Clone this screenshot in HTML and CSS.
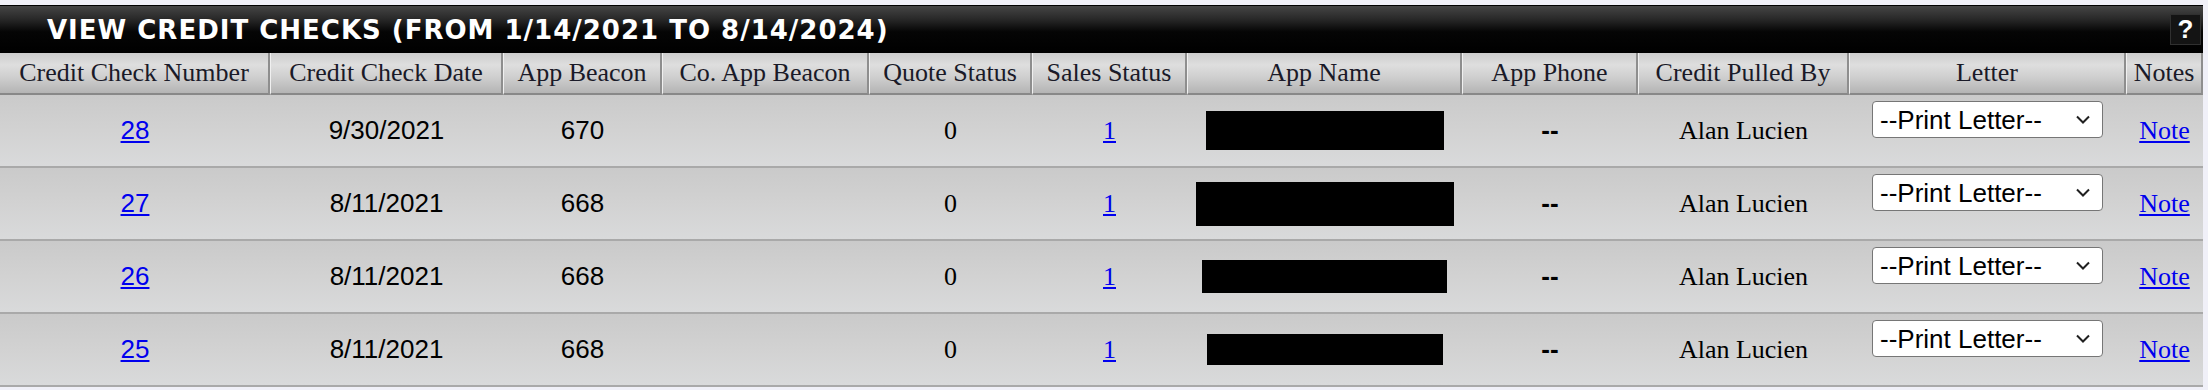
FILE: index.html
```html
<!DOCTYPE html>
<html>
<head>
<meta charset="utf-8">
<title>View Credit Checks</title>
<link rel="stylesheet" href="styles.css">
</head>
<body>
<div class="page">
  <div class="banner">
    <h1 class="banner-title">VIEW CREDIT CHECKS (FROM 1/14/2021 TO 8/14/2024)</h1>
    <span class="help">?</span>
  </div>
  <table class="grid">
    <colgroup>
      <col class="c1"><col class="c2"><col class="c3"><col class="c4"><col class="c5"><col class="c6"><col class="c7"><col class="c8"><col class="c9"><col class="c10"><col class="c11">
    </colgroup>
    <thead>
      <tr>
        <th>Credit Check Number</th>
        <th>Credit Check Date</th>
        <th>App Beacon</th>
        <th>Co. App Beacon</th>
        <th>Quote Status</th>
        <th>Sales Status</th>
        <th>App Name</th>
        <th>App Phone</th>
        <th>Credit Pulled By</th>
        <th>Letter</th>
        <th>Notes</th>
      </tr>
    </thead>
    <tbody>
      <tr>
        <td class="sans"><a href="#">28</a></td>
        <td class="sans">9/30/2021</td>
        <td class="sans">670</td>
        <td class="sans"></td>
        <td class="serif">0</td>
        <td class="serif"><a href="#">1</a></td>
        <td><div class="redact redact-a"></div></td>
        <td class="sans dash">--</td>
        <td class="serif">Alan Lucien</td>
        <td><select class="letter"><option>--Print Letter--</option></select></td>
        <td class="serif"><a href="#">Note</a></td>
      </tr>
      <tr>
        <td class="sans"><a href="#">27</a></td>
        <td class="sans">8/11/2021</td>
        <td class="sans">668</td>
        <td class="sans"></td>
        <td class="serif">0</td>
        <td class="serif"><a href="#">1</a></td>
        <td><div class="redact redact-b"></div></td>
        <td class="sans dash">--</td>
        <td class="serif">Alan Lucien</td>
        <td><select class="letter"><option>--Print Letter--</option></select></td>
        <td class="serif"><a href="#">Note</a></td>
      </tr>
      <tr>
        <td class="sans"><a href="#">26</a></td>
        <td class="sans">8/11/2021</td>
        <td class="sans">668</td>
        <td class="sans"></td>
        <td class="serif">0</td>
        <td class="serif"><a href="#">1</a></td>
        <td><div class="redact redact-c"></div></td>
        <td class="sans dash">--</td>
        <td class="serif">Alan Lucien</td>
        <td><select class="letter"><option>--Print Letter--</option></select></td>
        <td class="serif"><a href="#">Note</a></td>
      </tr>
      <tr>
        <td class="sans"><a href="#">25</a></td>
        <td class="sans">8/11/2021</td>
        <td class="sans">668</td>
        <td class="sans"></td>
        <td class="serif">0</td>
        <td class="serif"><a href="#">1</a></td>
        <td><div class="redact redact-d"></div></td>
        <td class="sans dash">--</td>
        <td class="serif">Alan Lucien</td>
        <td><select class="letter"><option>--Print Letter--</option></select></td>
        <td class="serif"><a href="#">Note</a></td>
      </tr>
    </tbody>
  </table>
</div>
</body>
</html>
```

FILE: styles.css
```css
html, body {
  margin: 0;
  padding: 0;
}
body {
  background: #f0f0f8;
  padding-top: 5px;
}
.page {
  width: 2203px;
}
.banner {
  display: flex;
  align-items: center;
  height: 47px;
  border-top: 1px solid #000;
  padding-left: 47px;
  padding-right: 2px;
  background: linear-gradient(to bottom, #454545 0%, #262626 30%, #050505 55%, #000 100%);
}
.banner-title {
  margin: 0;
  font-family: "DejaVu Sans", Verdana, sans-serif;
  font-weight: bold;
  font-size: 26px;
  letter-spacing: 1px;
  color: #fff;
}
.help {
  margin-left: auto;
  width: 29px;
  height: 29px;
  border: 1px solid #303030;
  background: #141414;
  color: #fff;
  font-family: "Liberation Sans", Arial, sans-serif;
  font-weight: bold;
  font-size: 26px;
  line-height: 29px;
  text-align: center;
}
.grid {
  width: 2203px;
  table-layout: fixed;
  border-collapse: separate;
  border-spacing: 0;
}
.c1 { width: 270px; }
.c2 { width: 233px; }
.c3 { width: 159px; }
.c4 { width: 207px; }
.c5 { width: 163px; }
.c6 { width: 155px; }
.c7 { width: 275px; }
.c8 { width: 176px; }
.c9 { width: 211px; }
.c10 { width: 277px; }
.c11 { width: 77px; }
.grid th {
  height: 42px;
  padding: 0;
  box-sizing: border-box;
  border-left: 1px solid #f0f0f0;
  border-right: 2px solid #8e8e8e;
  border-bottom: 2px solid #888;
  background: linear-gradient(to bottom, #cdcdcd 0%, #dedede 30%, #cfcfcf 60%, #b4b4b4 100%);
  font-family: "Liberation Serif", "Times New Roman", serif;
  font-weight: normal;
  font-size: 26px;
  color: #1a1a28;
  white-space: nowrap;
  overflow: hidden;
}
.grid th:first-child {
  border-left: none;
}
.grid td {
  height: 71px;
  padding: 0;
  border-bottom: 2px solid #a9a9a9;
  background: linear-gradient(to bottom, #cacaca 0%, #d2d2d2 50%, #d9dadb 100%);
  text-align: center;
  vertical-align: middle;
  font-size: 26px;
  color: #000;
}
.sans {
  font-family: "Liberation Sans", Arial, sans-serif;
}
.serif {
  font-family: "Liberation Serif", "Times New Roman", serif;
}
.dash {
  font-weight: bold;
  font-size: 21px;
}
.grid a {
  color: #0000ee;
  text-decoration: underline;
}
.redact {
  background: #000;
  margin: 0 auto;
}
.redact-a { width: 238px; height: 39px; }
.redact-b { width: 258px; height: 44px; }
.redact-c { width: 245px; height: 33px; }
.redact-d { width: 236px; height: 31px; }
.letter {
  display: block;
  box-sizing: border-box;
  margin: 0 auto 22px;
  width: 231px;
  height: 37px;
  padding: 0 30px 0 7px;
  appearance: none;
  -webkit-appearance: none;
  font-family: "Liberation Sans", Arial, sans-serif;
  font-size: 26px;
  color: #000;
  background-color: #fff;
  background-image: url("data:image/svg+xml;utf8,<svg xmlns='http://www.w3.org/2000/svg' width='14' height='9' viewBox='0 0 14 9'><path d='M1 1.5 L7 7.5 L13 1.5' fill='none' stroke='%23202020' stroke-width='2'/></svg>");
  background-repeat: no-repeat;
  background-position: right 12px center;
  border: 1px solid #767676;
  border-radius: 4px;
}
```
